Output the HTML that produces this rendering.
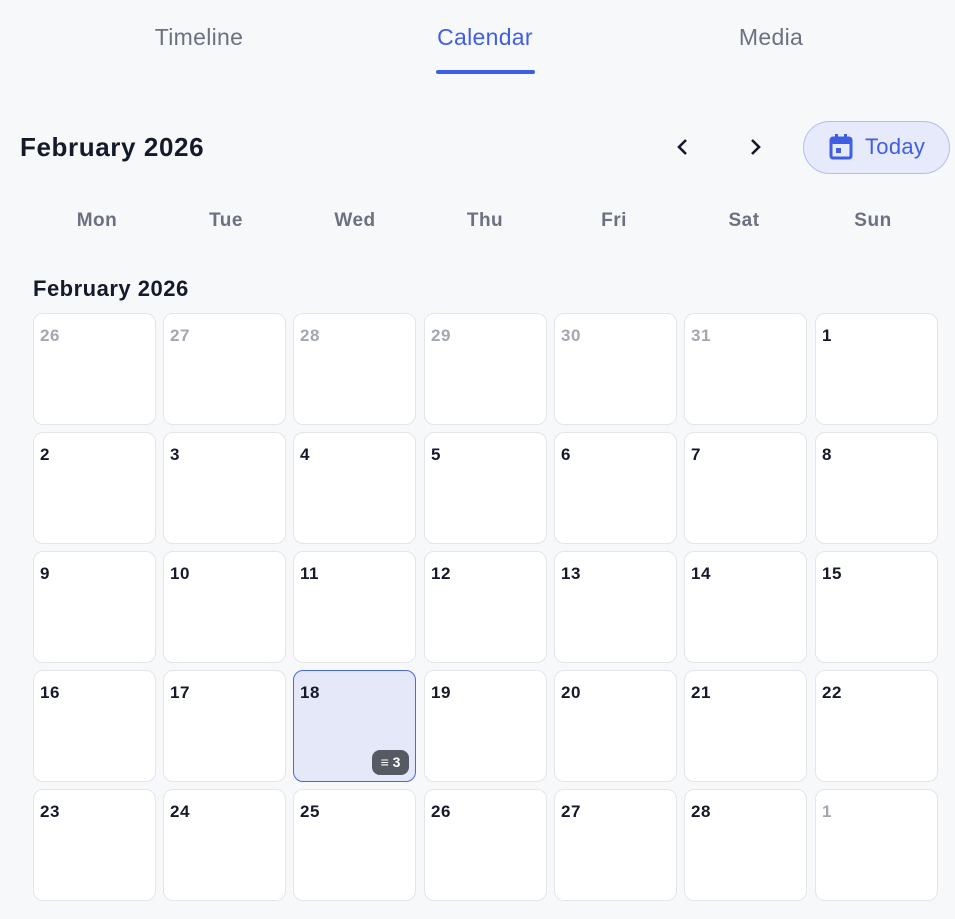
<!DOCTYPE html>
<html><head><meta charset="utf-8"><style>
*{box-sizing:border-box;margin:0;padding:0}
body{width:955px;height:919px;background:#f7f8fa;font-family:"Liberation Sans",sans-serif;position:relative;overflow:hidden;color:#151a2b}
.tab{position:absolute;top:24px;font-size:23px;color:#6b7180;transform:translateX(-50%);letter-spacing:0.3px}
.a{position:absolute}
.wd{position:absolute;top:210px;font-size:19px;color:#6b7180;font-weight:bold;transform:translateX(-50%);letter-spacing:0.5px}
.c{position:absolute;width:123px;height:112px;background:#fff;border:1.5px solid #e3e5ea;border-radius:10px}
.c span{position:absolute;left:6px;top:12px;font-size:17px;font-weight:bold;color:#151a2b;letter-spacing:0.5px}
.c.o span{color:#a3a7b1}
</style></head><body>
<div class="tab" style="left:199px">Timeline</div>
<div class="tab" style="left:485px;color:#3f5ee6">Calendar</div>
<div class="tab" style="left:771px">Media</div>
<div class="a" style="left:436px;top:70px;width:99px;height:4px;border-radius:2px;background:#3f5ee6"></div>
<div class="a" style="left:20px;top:132px;font-size:26px;font-weight:bold;letter-spacing:0.6px">February 2026</div>
<svg class="a" style="left:672px;top:136px" width="22" height="22" viewBox="0 0 22 22"><path d="M14 4L7 11L14 18" fill="none" stroke="#151a2b" stroke-width="2.6"/></svg>
<svg class="a" style="left:744px;top:136px" width="22" height="22" viewBox="0 0 22 22"><path d="M8 4L15 11L8 18" fill="none" stroke="#151a2b" stroke-width="2.6"/></svg>
<div class="a" style="left:803px;top:121px;width:147px;height:53px;border-radius:27px;background:#e7eafa;border:1.5px solid #b3bdf2"></div>
<svg class="a" style="left:828px;top:133px" width="26" height="28" viewBox="0 0 26 28"><rect x="3" y="5" width="20" height="20" rx="2" fill="none" stroke="#3f5ee6" stroke-width="3"/><rect x="3" y="5" width="20" height="6" fill="#3f5ee6"/><rect x="7" y="1" width="3" height="6" fill="#3f5ee6"/><rect x="16" y="1" width="3" height="6" fill="#3f5ee6"/><rect x="8" y="15" width="5" height="5" fill="#3f5ee6"/></svg>
<div class="a" style="left:865px;top:134px;font-size:22px;color:#3f5ee6;letter-spacing:0.3px">Today</div>
<div class="wd" style="left:97px">Mon</div><div class="wd" style="left:226px">Tue</div><div class="wd" style="left:355px">Wed</div><div class="wd" style="left:485px">Thu</div><div class="wd" style="left:614px">Fri</div><div class="wd" style="left:744px">Sat</div><div class="wd" style="left:873px">Sun</div>
<div class="a" style="left:33px;top:276px;font-size:22px;font-weight:bold;letter-spacing:0.5px">February 2026</div>
<div id="g"></div>
<script>
var xs=[33,163,293,424,554,684,815],ys=[313,432,551,670,789];
var d=[26,27,28,29,30,31,1];for(var i=2;i<=28;i++)d.push(i);d.push(1);
var h='';
for(var k=0;k<35;k++){var r=Math.floor(k/7),c=k%7;var o=(k<6||k==34)?' o':'';
var st='left:'+xs[c]+'px;top:'+ys[r]+'px';var extra='';
if(k==23){st+=';background:#e5e8f8;border-color:#4a67e6';extra='<div style="position:absolute;right:6px;bottom:6px;width:37px;height:25px;border-radius:8px;background:#565a63;color:#fff;font-size:14px;font-weight:bold;line-height:25px;text-align:center">&#8801; 3</div>';}
h+='<div class="c'+o+'" style="'+st+'"><span>'+d[k]+'</span>'+extra+'</div>';}
document.getElementById('g').innerHTML=h;
</script>
</body></html>
